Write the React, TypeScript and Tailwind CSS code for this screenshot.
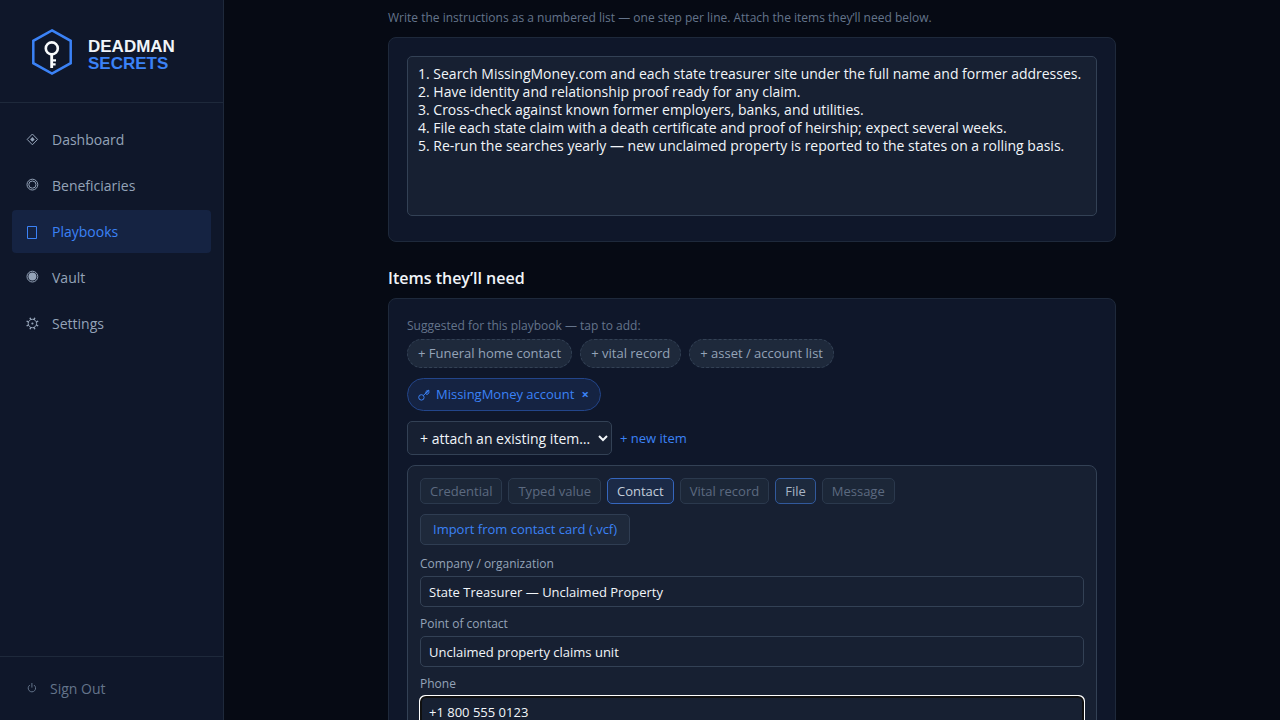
import type { ReactNode } from "react";

const steps = [
  "1. Search MissingMoney.com and each state treasurer site under the full name and former addresses.",
  "2. Have identity and relationship proof ready for any claim.",
  "3. Cross-check against known former employers, banks, and utilities.",
  "4. File each state claim with a death certificate and proof of heirship; expect several weeks.",
  "5. Re-run the searches yearly — new unclaimed property is reported to the states on a rolling basis.",
].join("\n");

const suggestions = ["+ Funeral home contact", "+ vital record", "+ asset / account list"];

const kinds = [
  { name: "Credential", look: "border-[#2b394d] bg-[#1c2738] text-[#5c6a80]" },
  { name: "Typed value", look: "border-[#2b394d] bg-[#1c2738] text-[#5c6a80]" },
  { name: "Contact", look: "border-[#3566bd] bg-[#1b2a47] text-[#c3cddb]" },
  { name: "Vital record", look: "border-[#2b394d] bg-[#1c2738] text-[#5c6a80]" },
  { name: "File", look: "border-[#31599c] bg-[#1c293d] text-[#a7b3c4]" },
  { name: "Message", look: "border-[#2b394d] bg-[#1c2738] text-[#5c6a80]" },
];

function Logo() {
  return (
    <svg width="40" height="50" viewBox="0 0 40 50" fill="none" aria-hidden="true">
      <path d="M20 4.4 38.7 14.8V37.2L20 47.6 1.3 37.2V14.8Z" stroke="#3b82f6" strokeWidth="2.5" />
      <circle cx="19.8" cy="22.4" r="6" stroke="#f8fafc" strokeWidth="2.6" />
      <path d="M20 28V42M20 34.4h4M20 38.4h3.6" stroke="#f8fafc" strokeWidth="2.2" />
      <path d="M19.6 28V42" stroke="#f8fafc" strokeWidth="2.6" />
    </svg>
  );
}

function Icon({ children }: { children: ReactNode }) {
  return (
    <svg width="17" height="17" viewBox="0 0 17 17" fill="none" stroke="currentColor" aria-hidden="true">
      {children}
    </svg>
  );
}

function NavItem({ icon, label, active }: { icon: ReactNode; label: string; active?: boolean }) {
  return (
    <a
      href="#"
      aria-current={active ? "page" : undefined}
      className={
        active
          ? "flex h-[43px] items-center gap-[11px] rounded bg-[#152342] px-3 text-[#3b82f6]"
          : "flex h-[43px] items-center gap-[11px] rounded px-3 text-[#94a3b8]"
      }
    >
      <Icon>{icon}</Icon>
      <span>{label}</span>
    </a>
  );
}

function Field({ id, label, value, focused }: { id: string; label: string; value: string; focused?: boolean }) {
  return (
    <div className="flex flex-col gap-[3px]">
      <label htmlFor={id} className="text-xs leading-[18px] text-[#94a3b8]">
        {label}
      </label>
      <input
        id={id}
        defaultValue={value}
        className={
          focused
            ? "h-[31px] w-full rounded-[5px] border border-[#334155] bg-[#172032] px-2 text-[13px] text-[#f1f5f9] [outline:auto_1px_-webkit-focus-ring-color]"
            : "h-[31px] w-full rounded-[5px] border border-[#334155] bg-[#172032] px-2 text-[13px] text-[#f1f5f9]"
        }
      />
    </div>
  );
}

export default function App() {
  return (
    <div className="flex h-screen bg-[#060a14] font-['Open_Sans',sans-serif] text-sm text-[#f1f5f9]">
      <aside className="flex w-56 shrink-0 flex-col border-r border-[#1e293b] bg-[#0f172a]">
        <div className="flex h-[103px] shrink-0 items-center gap-4 border-b border-[#1e293b] px-8">
          <Logo />
          <div className="pt-2 font-['Liberation_Sans',sans-serif] text-[17px] leading-[17px] font-bold">
            <div>DEADMAN</div>
            <div className="text-[#3b82f6]">SECRETS</div>
          </div>
        </div>
        <nav className="flex flex-1 flex-col gap-[3px] px-3 py-[15px]">
          <NavItem
            label="Dashboard"
            icon={
              <>
                <path d="M8.4 3 13.6 8.4 8.4 13.8 3.2 8.4Z" />
                <path d="M8.4 6 10.7 8.4 8.4 10.8 6.1 8.4Z" fill="currentColor" stroke="none" />
              </>
            }
          />
          <NavItem
            label="Beneficiaries"
            icon={
              <>
                <circle cx="8.4" cy="7.6" r="5.4" />
                <circle cx="8.4" cy="7.6" r="3.6" />
              </>
            }
          />
          <NavItem active label="Playbooks" icon={<path d="M3.5 3.5h9v12h-9z" />} />
          <NavItem
            label="Vault"
            icon={
              <>
                <circle cx="8.4" cy="7.6" r="5.4" />
                <circle cx="8.4" cy="7.6" r="4" fill="currentColor" stroke="none" />
              </>
            }
          />
          <NavItem
            label="Settings"
            icon={
              <>
                <circle cx="8.4" cy="8.5" r="4.2" />
                <circle cx="8.4" cy="8.5" r="1.1" fill="currentColor" stroke="none" />
                <path
                  d="M12.3 10.1l1.9.8M10 12.4l.8 1.9M6.8 12.4l-.8 1.9M4.5 10.1l-1.9.8M4.5 6.9l-1.9-.8M6.8 4.6 6 2.7M10 4.6l.8-1.9M12.3 6.9l1.9-.8"
                  strokeWidth="1.5"
                />
              </>
            }
          />
        </nav>
        <div className="flex h-16 shrink-0 items-center border-t border-[#1e293b] px-6">
          <button type="button" className="flex items-center gap-[9px] text-[#64748b]">
            <Icon>
              <path d="M5.8 5.1a3.7 3.7 0 1 0 4.2 0M7.9 3v4.6" />
            </Icon>
            Sign Out
          </button>
        </div>
      </aside>

      <main className="min-w-0 flex-1 overflow-y-auto [scrollbar-width:none]">
        <div className="mx-auto max-w-[728px] pt-2">
          <label htmlFor="steps" className="block text-xs leading-5 text-[#64748b]">
            Write the instructions as a numbered list — one step per line. Attach the items they’ll need below.
          </label>
          <section className="mt-[9px] rounded-lg border border-[#1e293b] bg-[#0f172a] px-[18px] pt-[18px] pb-[25px]">
            <textarea
              id="steps"
              defaultValue={steps}
              className="block h-40 w-full resize-none rounded-[5px] border border-[#334155] bg-[#172032] px-2.5 py-2 text-sm leading-[18px]"
            />
          </section>

          <h2 className="mt-6 text-base leading-6 font-semibold">Items they’ll need</h2>
          <section className="mt-2 flex flex-col gap-2.5 rounded-lg border border-[#1e293b] bg-[#0f172a] p-[18px]">
            <div className="flex flex-col gap-[5px]">
              <p className="text-xs leading-[17px] text-[#64748b]">Suggested for this playbook — tap to add:</p>
              <div className="flex flex-wrap gap-2">
                {suggestions.map((name) => (
                  <button
                    key={name}
                    type="button"
                    className="h-[29px] rounded-full border border-dashed border-[#334155] bg-[#1e293b] px-2.5 text-[13px] text-[#94a3b8]"
                  >
                    {name}
                  </button>
                ))}
              </div>
            </div>

            <div className="flex h-[33px] items-center gap-1.5 self-start rounded-full border border-[#23458a] bg-[#152342] px-2.5 text-[13px] text-[#3b82f6]">
              <svg width="12" height="12" viewBox="0 0 12 12" fill="none" stroke="currentColor" aria-hidden="true">
                <circle cx="3.4" cy="8.4" r="2.7" />
                <path d="M5.4 6.4 11 1.2" />
                <path d="M7.4 4.4 9 5.8 11 4V1.2L8.4 1.8Z" fill="currentColor" fillOpacity="0.35" strokeWidth="0.7" />
              </svg>
              MissingMoney account
              <button type="button" aria-label="Remove MissingMoney account" className="px-px font-bold">
                ×
              </button>
            </div>

            <div className="flex items-center gap-2">
              <select
                aria-label="Attach an existing item"
                className="h-[34px] w-[205px] rounded-[5px] border border-[#334155] bg-[#172032] pr-1 pl-2 text-sm"
              >
                <option>+ attach an existing item…</option>
              </select>
              <button type="button" className="text-[13px] text-[#3b82f6]">
                + new item
              </button>
            </div>

            <div className="flex flex-col gap-2.5 rounded-lg border border-[#334155] bg-[#172032] p-3">
              <div className="flex flex-wrap gap-1.5">
                {kinds.map((kind) => (
                  <button
                    key={kind.name}
                    type="button"
                    className={`h-[26px] rounded-[5px] border px-[9px] text-[13px] ${kind.look}`}
                  >
                    {kind.name}
                  </button>
                ))}
              </div>
              <button
                type="button"
                className="h-[31px] self-start rounded-[5px] border border-[#2f3d52] bg-[#1e293b] px-3 text-[13px] text-[#3b82f6]"
              >
                Import from contact card (.vcf)
              </button>
              <div className="flex flex-col gap-2">
                <Field id="company" label="Company / organization" value="State Treasurer — Unclaimed Property" />
                <Field id="contact" label="Point of contact" value="Unclaimed property claims unit" />
                <Field id="phone" label="Phone" value="+1 800 555 0123" focused />
              </div>
            </div>
          </section>
        </div>
      </main>
    </div>
  );
}
